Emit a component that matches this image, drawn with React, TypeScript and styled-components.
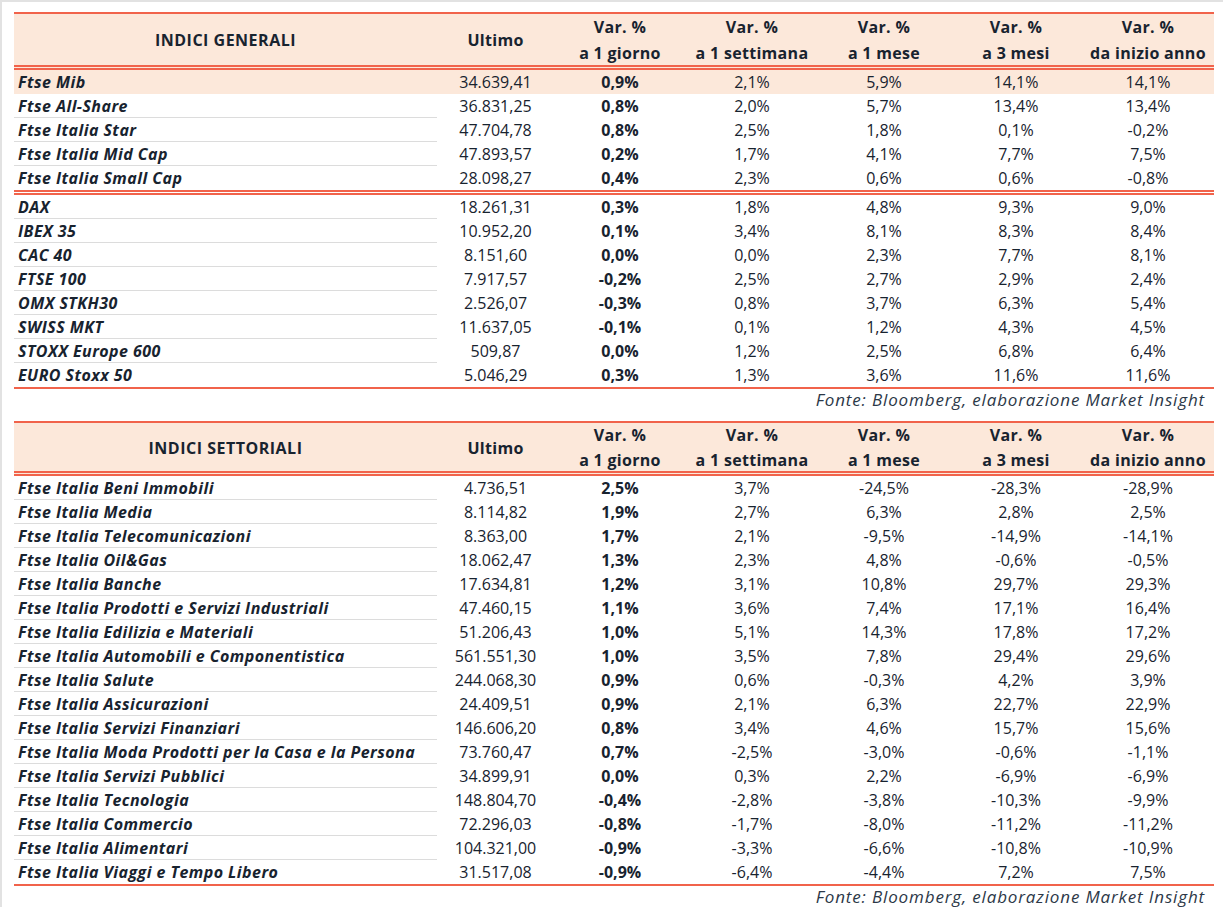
import styled, { createGlobalStyle } from 'styled-components';

const GlobalStyle = createGlobalStyle`
    html, body {
        margin: 0;
        padding: 0;
        background: #ffffff;
    }
    body {
        font-family: "Open Sans", "Liberation Sans", sans-serif;
        color: #18232f;
    }
`;

const ORANGE = '#f1634b';
const PEACH = '#fce8da';
const COLUMNS = '423px 117px repeat(5, 132px)';

type Riga = {
    nome: string;
    valori: string[];
    evidenza?: boolean;
    fineGruppo?: boolean;
};

const Pagina = styled.div`
    box-sizing: border-box;
    width: 1223px;
    height: 907px;
    border-top: 2px solid #e2e2e2;
    border-left: 2px solid #e2e2e2;
    padding: 10px 0 0 12px;
    overflow: hidden;
`;

const Tabella = styled.div`
    width: 1200px;
    border-bottom: 2px solid ${ORANGE};
`;

const Intestazione = styled.div<{ $altezza: number }>`
    display: grid;
    grid-template-columns: ${COLUMNS};
    height: ${(p) => p.$altezza}px;
    background: ${PEACH};
    border-top: 2px solid ${ORANGE};
    border-bottom: 5px double ${ORANGE};
    font-weight: 700;
    font-size: 16px;
    letter-spacing: 0.3px;
`;

const CellaTitolo = styled.div`
    display: flex;
    align-items: center;
    justify-content: center;
    text-transform: uppercase;
    letter-spacing: 0.5px;
`;

const CellaColonna = styled.div<{ $riga: number }>`
    display: flex;
    flex-direction: column;
    align-items: center;
    justify-content: center;
    line-height: ${(p) => p.$riga}px;
    white-space: nowrap;
`;

const Riga = styled.div<{ $evidenza?: boolean; $doppio?: boolean }>`
    display: grid;
    grid-template-columns: ${COLUMNS};
    background: ${(p) => (p.$evidenza ? PEACH : 'transparent')};
    border-bottom: ${(p) => (p.$doppio ? `5px double ${ORANGE}` : 'none')};
    font-size: 16px;
`;

const Nome = styled.div<{ $linea: boolean }>`
    height: 23px;
    line-height: 24px;
    padding-left: 4px;
    font-weight: 700;
    font-style: italic;
    letter-spacing: 0.45px;
    white-space: nowrap;
    border-bottom: 1px solid ${(p) => (p.$linea ? '#dcdcdc' : 'transparent')};
`;

const Valore = styled.div<{ $grassetto?: boolean }>`
    height: 23px;
    line-height: 24px;
    text-align: center;
    font-weight: ${(p) => (p.$grassetto ? 700 : 400)};
    border-bottom: 1px solid transparent;
`;

const Fonte = styled.div<{ $margine: number }>`
    width: 1200px;
    box-sizing: border-box;
    padding-right: 9px;
    text-align: right;
    font-style: italic;
    font-size: 17px;
    letter-spacing: 0.85px;
    line-height: 22px;
    color: #2c3848;
    margin-bottom: ${(p) => p.$margine}px;
`;

const generali: Riga[] = [
    { nome: 'Ftse Mib', valori: ['34.639,41', '0,9%', '2,1%', '5,9%', '14,1%', '14,1%'], evidenza: true },
    { nome: 'Ftse All-Share', valori: ['36.831,25', '0,8%', '2,0%', '5,7%', '13,4%', '13,4%'] },
    { nome: 'Ftse Italia Star', valori: ['47.704,78', '0,8%', '2,5%', '1,8%', '0,1%', '-0,2%'] },
    { nome: 'Ftse Italia Mid Cap', valori: ['47.893,57', '0,2%', '1,7%', '4,1%', '7,7%', '7,5%'] },
    { nome: 'Ftse Italia Small Cap', valori: ['28.098,27', '0,4%', '2,3%', '0,6%', '0,6%', '-0,8%'], fineGruppo: true },
    { nome: 'DAX', valori: ['18.261,31', '0,3%', '1,8%', '4,8%', '9,3%', '9,0%'] },
    { nome: 'IBEX 35', valori: ['10.952,20', '0,1%', '3,4%', '8,1%', '8,3%', '8,4%'] },
    { nome: 'CAC 40', valori: ['8.151,60', '0,0%', '0,0%', '2,3%', '7,7%', '8,1%'] },
    { nome: 'FTSE 100', valori: ['7.917,57', '-0,2%', '2,5%', '2,7%', '2,9%', '2,4%'] },
    { nome: 'OMX STKH30', valori: ['2.526,07', '-0,3%', '0,8%', '3,7%', '6,3%', '5,4%'] },
    { nome: 'SWISS MKT', valori: ['11.637,05', '-0,1%', '0,1%', '1,2%', '4,3%', '4,5%'] },
    { nome: 'STOXX Europe 600', valori: ['509,87', '0,0%', '1,2%', '2,5%', '6,8%', '6,4%'] },
    { nome: 'EURO Stoxx 50', valori: ['5.046,29', '0,3%', '1,3%', '3,6%', '11,6%', '11,6%'] },
];

const settoriali: Riga[] = [
    { nome: 'Ftse Italia Beni Immobili', valori: ['4.736,51', '2,5%', '3,7%', '-24,5%', '-28,3%', '-28,9%'] },
    { nome: 'Ftse Italia Media', valori: ['8.114,82', '1,9%', '2,7%', '6,3%', '2,8%', '2,5%'] },
    { nome: 'Ftse Italia Telecomunicazioni', valori: ['8.363,00', '1,7%', '2,1%', '-9,5%', '-14,9%', '-14,1%'] },
    { nome: 'Ftse Italia Oil&Gas', valori: ['18.062,47', '1,3%', '2,3%', '4,8%', '-0,6%', '-0,5%'] },
    { nome: 'Ftse Italia Banche', valori: ['17.634,81', '1,2%', '3,1%', '10,8%', '29,7%', '29,3%'] },
    { nome: 'Ftse Italia Prodotti e Servizi Industriali', valori: ['47.460,15', '1,1%', '3,6%', '7,4%', '17,1%', '16,4%'] },
    { nome: 'Ftse Italia Edilizia e Materiali', valori: ['51.206,43', '1,0%', '5,1%', '14,3%', '17,8%', '17,2%'] },
    { nome: 'Ftse Italia Automobili e Componentistica', valori: ['561.551,30', '1,0%', '3,5%', '7,8%', '29,4%', '29,6%'] },
    { nome: 'Ftse Italia Salute', valori: ['244.068,30', '0,9%', '0,6%', '-0,3%', '4,2%', '3,9%'] },
    { nome: 'Ftse Italia Assicurazioni', valori: ['24.409,51', '0,9%', '2,1%', '6,3%', '22,7%', '22,9%'] },
    { nome: 'Ftse Italia Servizi Finanziari', valori: ['146.606,20', '0,8%', '3,4%', '4,6%', '15,7%', '15,6%'] },
    { nome: 'Ftse Italia Moda Prodotti per la Casa e la Persona', valori: ['73.760,47', '0,7%', '-2,5%', '-3,0%', '-0,6%', '-1,1%'] },
    { nome: 'Ftse Italia Servizi Pubblici', valori: ['34.899,91', '0,0%', '0,3%', '2,2%', '-6,9%', '-6,9%'] },
    { nome: 'Ftse Italia Tecnologia', valori: ['148.804,70', '-0,4%', '-2,8%', '-3,8%', '-10,3%', '-9,9%'] },
    { nome: 'Ftse Italia Commercio', valori: ['72.296,03', '-0,8%', '-1,7%', '-8,0%', '-11,2%', '-11,2%'] },
    { nome: 'Ftse Italia Alimentari', valori: ['104.321,00', '-0,9%', '-3,3%', '-6,6%', '-10,8%', '-10,9%'] },
    { nome: 'Ftse Italia Viaggi e Tempo Libero', valori: ['31.517,08', '-0,9%', '-6,4%', '-4,4%', '7,2%', '7,5%'] },
];

const colonne: [string, string][] = [
    ['Var. %', 'a 1 giorno'],
    ['Var. %', 'a 1 settimana'],
    ['Var. %', 'a 1 mese'],
    ['Var. %', 'a 3 mesi'],
    ['Var. %', 'da inizio anno'],
];

const TabellaIndici = ({ titolo, righe, altezza, interlinea }: { titolo: string; righe: Riga[]; altezza: number; interlinea: number }) => (
    <Tabella>
        <Intestazione $altezza={altezza}>
            <CellaTitolo>{titolo}</CellaTitolo>
            <CellaColonna $riga={interlinea}>Ultimo</CellaColonna>
            {colonne.map(([a, b]) => (
                <CellaColonna key={b} $riga={interlinea}>
                    <span>{a}</span>
                    <span>{b}</span>
                </CellaColonna>
            ))}
        </Intestazione>
        {righe.map((r, i) => {
            const ultima = i === righe.length - 1;
            return (
                <Riga key={r.nome} $evidenza={r.evidenza} $doppio={r.fineGruppo}>
                    <Nome $linea={!r.fineGruppo && !ultima && !r.evidenza}>{r.nome}</Nome>
                    {r.valori.map((v, j) => (
                        <Valore key={j} $grassetto={j === 1}>{v}</Valore>
                    ))}
                </Riga>
            );
        })}
    </Tabella>
);

const App = () => {
    return (
        <Pagina>
            <GlobalStyle />
            <TabellaIndici titolo="Indici generali" righe={generali} altezza={51} interlinea={26} />
            <Fonte $margine={10}>Fonte: Bloomberg, elaborazione Market Insight</Fonte>
            <TabellaIndici titolo="Indici settoriali" righe={settoriali} altezza={48} interlinea={25} />
            <Fonte $margine={0}>Fonte: Bloomberg, elaborazione Market Insight</Fonte>
        </Pagina>
    );
};

export default App;
